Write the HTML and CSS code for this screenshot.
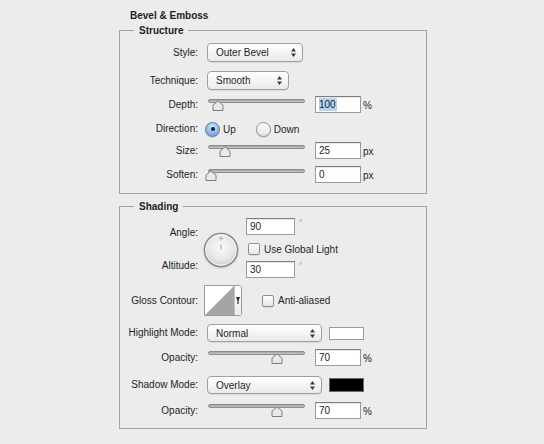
FILE: index.html
```html
<!DOCTYPE html>
<html>
<head>
<meta charset="utf-8">
<title>Bevel &amp; Emboss</title>
<link rel="stylesheet" href="styles.css">
</head>
<body>
<div class="panel">
  <div class="title">Bevel &amp; Emboss</div>

  <fieldset class="group structure">
    <legend>Structure</legend>

    <div class="row r-style">
      <span class="label">Style:</span>
      <div class="popup w-style"><span class="popup-text">Outer Bevel</span>
        <svg class="updown" width="5" height="9" viewBox="0 0 5 9"><path d="M2.5 0L5 3.4H0z M0 5.6h5L2.5 9z" fill="#3a3a3a"/></svg>
      </div>
    </div>

    <div class="row r-tech">
      <span class="label">Technique:</span>
      <div class="popup w-tech"><span class="popup-text">Smooth</span>
        <svg class="updown" width="5" height="9" viewBox="0 0 5 9"><path d="M2.5 0L5 3.4H0z M0 5.6h5L2.5 9z" fill="#3a3a3a"/></svg>
      </div>
    </div>

    <div class="row slider-row r-depth">
      <span class="label">Depth:</span>
      <div class="slider"><div class="track"></div>
        <svg class="thumb" style="left:4px" width="12" height="11" viewBox="0 0 12 11"><path d="M1 10.5V5.2L6 0.8l5 4.4v5.3z" fill="#e9e9e9" stroke="#7c7c7c"/></svg>
      </div>
      <div class="field"><span class="sel">100</span></div>
      <span class="unit">%</span>
    </div>

    <div class="row r-dir">
      <span class="label">Direction:</span>
      <span class="radio on"></span><span class="opt">Up</span>
      <span class="radio gap"></span><span class="opt">Down</span>
    </div>

    <div class="row slider-row r-size">
      <span class="label">Size:</span>
      <div class="slider"><div class="track"></div>
        <svg class="thumb" style="left:11px" width="12" height="11" viewBox="0 0 12 11"><path d="M1 10.5V5.2L6 0.8l5 4.4v5.3z" fill="#e9e9e9" stroke="#7c7c7c"/></svg>
      </div>
      <div class="field">25</div>
      <span class="unit">px</span>
    </div>

    <div class="row slider-row r-soften">
      <span class="label">Soften:</span>
      <div class="slider"><div class="track"></div>
        <svg class="thumb" style="left:-3px" width="12" height="11" viewBox="0 0 12 11"><path d="M1 10.5V5.2L6 0.8l5 4.4v5.3z" fill="#e9e9e9" stroke="#7c7c7c"/></svg>
      </div>
      <div class="field">0</div>
      <span class="unit">px</span>
    </div>
  </fieldset>

  <fieldset class="group shading">
    <legend>Shading</legend>

    <div class="row angle-block">
      <div class="label stack"><span>Angle:</span><span>Altitude:</span></div>
      <svg class="dial" width="36" height="36" viewBox="0 0 36 36">
        <defs>
          <radialGradient id="dg" cx="50%" cy="42%" r="60%">
            <stop offset="0" stop-color="#fbfbfb"/>
            <stop offset="0.65" stop-color="#e6e6e6"/>
            <stop offset="1" stop-color="#c9c9c9"/>
          </radialGradient>
        </defs>
        <circle cx="18" cy="18" r="16.6" fill="url(#dg)" stroke="#858585" stroke-width="1.3"/>
        <circle cx="18" cy="18" r="15.2" fill="none" stroke="#ffffff" stroke-opacity="0.7"/>
        <path d="M18 4.2v4.4M15.8 6.4h4.4" stroke="#b4b4b4" stroke-width="1"/>
        <path d="M18 12.5v5" stroke="#a0a0a0" stroke-width="1"/>
      </svg>
      <div class="angle-fields">
        <div class="field-line"><div class="field w-angle">90</div><span class="deg">°</span></div>
        <div class="check-line"><span class="checkbox"></span><span class="opt">Use Global Light</span></div>
        <div class="field-line"><div class="field w-angle">30</div><span class="deg">°</span></div>
      </div>
    </div>

    <div class="row r-gloss">
      <span class="label">Gloss Contour:</span>
      <div class="contour">
        <svg class="curve" width="29" height="29" viewBox="0 0 29 29"><polygon points="0,29 29,0 29,29" fill="#a5a5a5"/></svg>
        <span class="contour-drop"><svg width="4" height="7" viewBox="0 0 4 7"><path d="M0 0h4L2.6 3.5V7h-1.2V3.5z" fill="#2a2a2a"/></svg></span>
      </div>
      <span class="checkbox cb-aa"></span><span class="opt">Anti-aliased</span>
    </div>

    <div class="row r-hmode">
      <span class="label">Highlight Mode:</span>
      <div class="popup w-mode"><span class="popup-text">Normal</span>
        <svg class="updown" width="5" height="9" viewBox="0 0 5 9"><path d="M2.5 0L5 3.4H0z M0 5.6h5L2.5 9z" fill="#3a3a3a"/></svg>
      </div>
      <span class="swatch white"></span>
    </div>

    <div class="row slider-row r-op1">
      <span class="label">Opacity:</span>
      <div class="slider"><div class="track"></div>
        <svg class="thumb" style="left:63px" width="12" height="11" viewBox="0 0 12 11"><path d="M1 10.5V5.2L6 0.8l5 4.4v5.3z" fill="#e9e9e9" stroke="#7c7c7c"/></svg>
      </div>
      <div class="field">70</div>
      <span class="unit">%</span>
    </div>

    <div class="row r-smode">
      <span class="label">Shadow Mode:</span>
      <div class="popup w-mode"><span class="popup-text">Overlay</span>
        <svg class="updown" width="5" height="9" viewBox="0 0 5 9"><path d="M2.5 0L5 3.4H0z M0 5.6h5L2.5 9z" fill="#3a3a3a"/></svg>
      </div>
      <span class="swatch black"></span>
    </div>

    <div class="row slider-row r-op2">
      <span class="label">Opacity:</span>
      <div class="slider"><div class="track"></div>
        <svg class="thumb" style="left:63px" width="12" height="11" viewBox="0 0 12 11"><path d="M1 10.5V5.2L6 0.8l5 4.4v5.3z" fill="#e9e9e9" stroke="#7c7c7c"/></svg>
      </div>
      <div class="field">70</div>
      <span class="unit">%</span>
    </div>
  </fieldset>
</div>
</body>
</html>
```

FILE: styles.css
```css
* { box-sizing: border-box; }

html, body { margin: 0; padding: 0; }

body {
  background: #ececec;
  font-family: "Liberation Sans", Arial, sans-serif;
  font-size: 10px;
  color: #1e1e1e;
  width: 544px;
  height: 444px;
  overflow: hidden;
}

.panel {
  width: 308px;
  margin-left: 119px;
  padding-top: 10px;
}

.title {
  font-weight: bold;
  line-height: 12px;
  height: 12px;
  padding-left: 11px;
}

fieldset.group {
  margin: 2px 0 0;
  padding: 0 0 10px;
  border: 1px solid #a4a4a4;
  min-width: 0;
}

fieldset.shading {
  margin-top: 6px;
  padding-bottom: 9px;
}

legend {
  font-weight: bold;
  line-height: 13px;
  padding: 0 5px;
  margin-left: 14px;
}

.row {
  display: flex;
  align-items: center;
}

.label {
  flex: none;
  width: 78px;
  margin-right: 6px;
  text-align: right;
  line-height: 12px;
}

/* vertical rhythm */
.r-style { margin-top: 6px; height: 19px; }
.r-tech { margin-top: 9px; height: 19px; }
.r-depth { margin-top: 6px; }
.r-dir { margin-top: 8px; height: 16px; }
.r-size { margin-top: 5px; }
.r-soften { margin-top: 7px; }

.angle-block { margin-top: 5px; height: 61px; align-items: flex-start; }
.r-gloss { margin-top: 6px; height: 31px; }
.r-hmode { margin-top: 8px; height: 18px; }
.r-op1 { margin-top: 7px; }
.r-smode { margin-top: 10px; height: 18px; }
.r-op2 { margin-top: 8px; }

/* popup buttons */
.popup {
  display: flex;
  align-items: center;
  justify-content: space-between;
  height: 100%;
  margin-left: 3px;
  padding: 0 6px 0 8px;
  border: 1px solid #a0a0a0;
  border-radius: 4px;
  background: linear-gradient(#ffffff, #f6f6f6 45%, #e9e9e9);
  box-shadow: 0 1px 1px rgba(0, 0, 0, 0.08);
}
.popup-text { line-height: 12px; padding-top: 1px; }
.w-style { width: 96px; }
.w-tech { width: 82px; }
.w-mode { width: 115px; }
.updown { flex: none; }

/* sliders */
.slider-row { height: 17px; }
.slider {
  position: relative;
  flex: none;
  width: 97px;
  height: 17px;
  margin-left: 4px;
}
.track {
  height: 4px;
  margin-top: 3px;
  border-radius: 2px;
  border: 1px solid #8c8c8c;
  background: linear-gradient(#a3a3a3, #c9c9c9);
}
.thumb {
  position: absolute;
  top: 4px;
}
.r-op1 .track, .r-op2 .track { margin-top: 2px; }

/* text fields */
.field {
  flex: none;
  width: 46px;
  height: 17px;
  margin-left: 10px;
  padding: 2px 0 0 3px;
  line-height: 12px;
  background: #fff;
  border: 1px solid #9a9a9a;
  border-top-color: #7d7d7d;
  box-shadow: inset 0 1px 1px rgba(0, 0, 0, 0.1);
}
.sel { background: #b6d2f5; padding: 1px 1px 1px 0; }
.unit { margin-left: 2px; line-height: 12px; padding-top: 2px; }

/* radios & checkboxes */
.radio {
  flex: none;
  width: 15px;
  height: 15px;
  margin-left: 1px;
  border-radius: 50%;
  border: 1px solid #8d8d8d;
  background: linear-gradient(#ffffff, #e3e3e3);
  box-shadow: 0 1px 1px rgba(0, 0, 0, 0.12);
  display: flex;
  align-items: center;
  justify-content: center;
}
.radio.on {
  border-color: #5679a8;
  background: radial-gradient(circle at 50% 30%, #d9e9fb, #8db8ea 55%, #5f97da);
}
.radio.on::after {
  content: "";
  width: 4px;
  height: 4px;
  border-radius: 50%;
  background: #15202e;
}
.radio.gap { margin-left: 20px; }
.opt { margin-left: 3px; line-height: 12px; padding-top: 2px; }

.checkbox {
  flex: none;
  width: 12px;
  height: 12px;
  border: 1px solid #8f8f8f;
  border-radius: 2px;
  background: linear-gradient(#ffffff, #e6e6e6);
  box-shadow: 0 1px 1px rgba(0, 0, 0, 0.08);
}
.cb-aa { margin-left: 20px; }
.check-line .opt, .r-gloss .opt { margin-left: 4px; padding-top: 1px; }

/* angle block */
.stack {
  display: flex;
  flex-direction: column;
  align-items: flex-end;
  gap: 21px;
  padding-top: 9px;
}
.dial {
  flex: none;
  margin-top: 14px;
  margin-left: -1px;
  filter: drop-shadow(0 1px 1px rgba(0, 0, 0, 0.15));
}
.angle-fields {
  display: flex;
  flex-direction: column;
  margin-left: 7px;
}
.field-line { display: flex; align-items: flex-start; }
.field-line .field { margin-left: 0; }
.w-angle { width: 49px; }
.deg {
  margin-left: 4px;
  font-size: 8px;
  line-height: 8px;
  color: #8a8a8a;
  padding-top: 1px;
}
.check-line {
  display: flex;
  align-items: center;
  height: 12px;
  margin: 8px 0 6px 2px;
}

/* contour */
.contour {
  flex: none;
  display: flex;
  width: 38px;
  height: 31px;
  border: 1px solid #9a9a9a;
  border-radius: 0 3px 3px 0;
  background: #fff;
  overflow: hidden;
}
.curve { flex: none; display: block; }
.contour-drop {
  flex: 1;
  display: flex;
  align-items: center;
  justify-content: center;
  border-left: 1px solid #c4c4c4;
  background: linear-gradient(#fdfdfd, #ececec);
}

/* colour swatches */
.swatch {
  flex: none;
  width: 35px;
  height: 13px;
  margin-left: 7px;
  border: 1px solid #9a9a9a;
}
.swatch.white { background: #fff; }
.swatch.black { background: #000; border-color: #6a6a6a; height: 14px; }
```
